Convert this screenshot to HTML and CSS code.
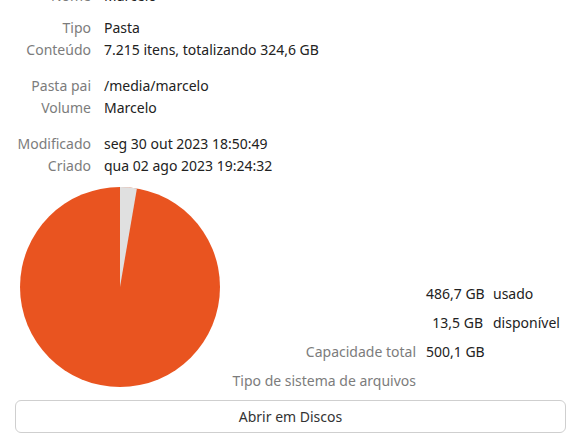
FILE: index.html
```html
<!DOCTYPE html>
<html lang="pt-BR">
<head>
    <meta charset="UTF-8">
    <title>Propriedades - Marcelo</title>
    <link rel="stylesheet" href="styles.css">
</head>
<body>
    <div class="panel">
        <!-- informações básicas -->
        <div class="info">
            <span class="label">Nome</span><span class="value">Marcelo</span>
            <span class="label first">Tipo</span><span class="value first">Pasta</span>
            <span class="label">Conteúdo</span><span class="value">7.215 itens, totalizando 324,6 GB</span>
            <span class="label gap">Pasta pai</span><span class="value gap">/media/marcelo</span>
            <span class="label">Volume</span><span class="value">Marcelo</span>
            <span class="label gap">Modificado</span><span class="value gap">seg 30 out 2023 18:50:49</span>
            <span class="label">Criado</span><span class="value">qua 02 ago 2023 19:24:32</span>
        </div>

        <!-- uso do disco -->
        <div class="usage">
            <svg class="pie" width="200" height="200" viewBox="0 0 200 200">
                <circle cx="100" cy="100" r="100" fill="#e95420"/>
                <path d="M100 100 L100 0 A100 100 0 0 1 116.9 1.4 Z" fill="#e0e0e0"/>
            </svg>
            <div class="stats">
                <span></span><span class="num">486,7 GB</span><span class="unit">usado</span>
                <span></span><span class="num">13,5 GB</span><span class="unit">disponível</span>
                <span class="label">Capacidade total</span><span class="num">500,1 GB</span><span></span>
                <span class="label">Tipo de sistema de arquivos</span><span></span><span></span>
            </div>
        </div>

        <button class="button">Abrir em Discos</button>
    </div>
</body>
</html>
```

FILE: styles.css
```css
/* painel de propriedades */
body {
    margin: 0;
    background: #ffffff;
    font-family: "Noto Sans", sans-serif;
    font-size: 14px;
    color: #2e2e2e;
    overflow: hidden;
}

.panel {
    margin-top: -14px;
    padding: 0 15px;
}

/* grade de rótulos e valores */
.info {
    display: grid;
    grid-template-columns: 76px 1fr;
    column-gap: 13px;
    row-gap: 3px;
    line-height: 19px;
}
.label {
    text-align: right;
    color: #7c7c7c;
    white-space: nowrap;
}
.value {
    color: #222;
}
.first {
    margin-top: 10px;
}
.gap {
    margin-top: 14px;
}

/* gráfico e números */
.usage {
    display: flex;
    align-items: flex-end;
    margin-top: 12px;
}
.pie {
    margin-left: 5px;
    flex: none;
}
.stats {
    display: grid;
    grid-template-columns: 196px 57px auto;
    column-gap: 10px;
    row-gap: 10px;
    line-height: 19px;
    margin-bottom: -3px;
}
.num {
    text-align: right;
    color: #222;
    white-space: nowrap;
}
.unit {
    color: #222;
}

/* botão */
.button {
    display: block;
    width: 100%;
    margin-top: 13px;
    height: 33px;
    font-family: inherit;
    font-size: 14px;
    color: #333;
    background: #fff;
    border: 1px solid #cfcfcf;
    border-radius: 6px;
}
```
